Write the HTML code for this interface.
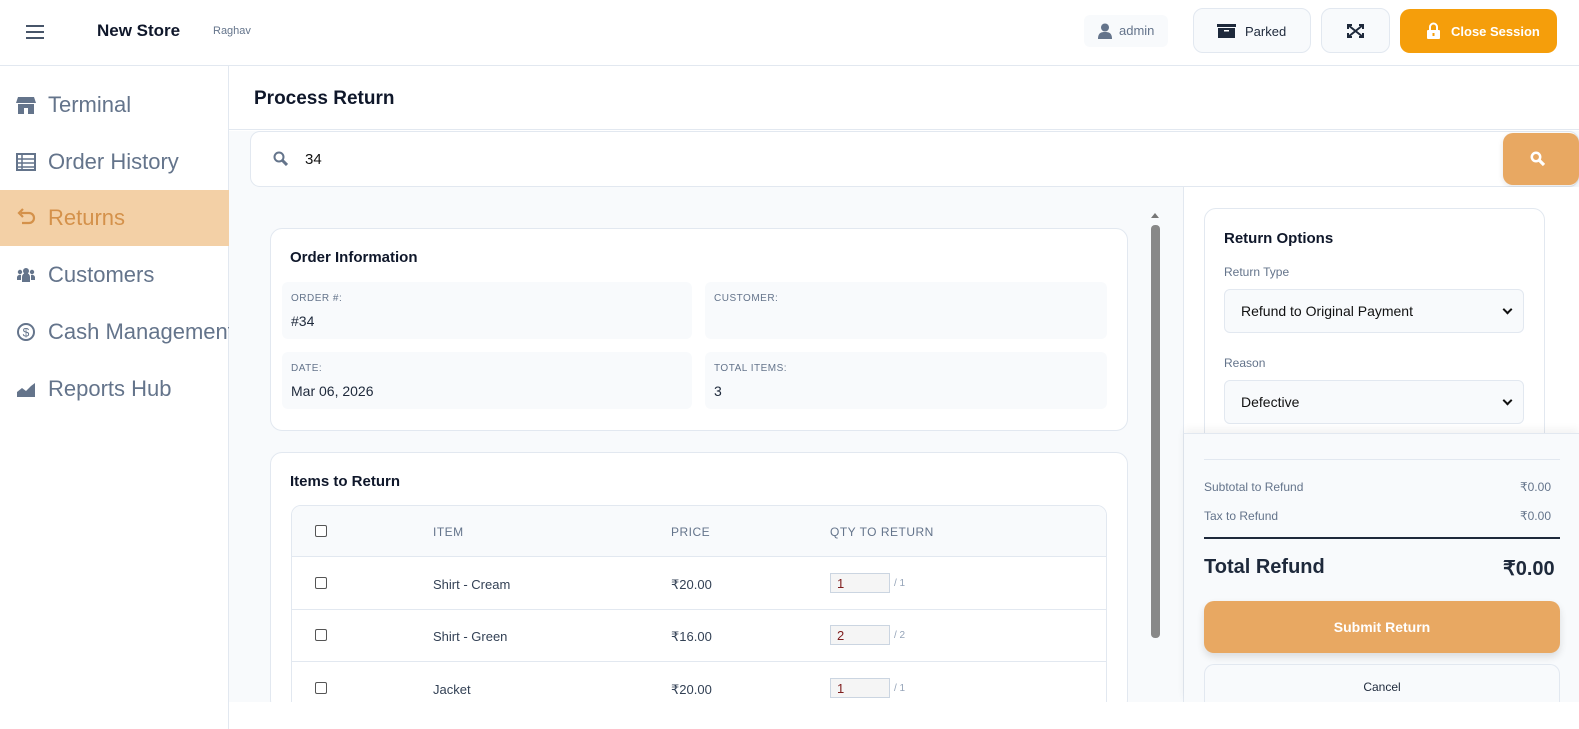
<!DOCTYPE html>
<html><head><meta charset="utf-8"><style>
*{box-sizing:border-box;margin:0;padding:0}
body{width:1579px;height:729px;overflow:hidden;background:#fff;font-family:"Liberation Sans",sans-serif;position:relative;color:#1e293b}
.a{position:absolute;white-space:nowrap}
.nav{position:absolute;left:0;width:229px;height:56px;display:flex;align-items:center;font-size:22px;color:#64748b;padding-left:16px;white-space:nowrap;overflow:hidden}
.nav svg{width:20px;height:20px;margin-right:12px;flex:none}
.lbl{font-size:10px;color:#64748b;letter-spacing:.5px}
.fld{position:absolute;background:#f8fafc;border-radius:6px;padding:11px 9px}
.fld .v{font-size:14px;color:#1e293b;margin-top:9px}
.cb{position:absolute;width:12px;height:12px;border:1px solid #555;border-radius:2px;background:#fff}
.td{position:absolute;font-size:13px;color:#334155}
.qty{position:absolute;width:60px;height:20px;border:1px solid #cbd5e1;background:#f5f5f5;font-size:13px;padding:2px 6px;color:#7f1d1d}
.sel{position:absolute;left:1224px;width:300px;height:44px;border:1px solid #e2e8f0;border-radius:6px;background:#f8fafc;font-size:14px;padding:13px 16px;color:#111}
.sel:after{content:"";position:absolute;right:12px;top:16px;width:5px;height:5px;border-right:2px solid #111;border-bottom:2px solid #111;transform:rotate(45deg)}
</style></head><body>
<div class="a" style="left:0;top:0;width:1579px;height:66px;border-bottom:1px solid #e2e8f0;background:#fff"></div>
<svg class="a" style="left:26px;top:25px" width="18" height="14"><path d="M0 1h18M0 7h18M0 13h18" stroke="#475569" stroke-width="2"/></svg>
<div class="a" style="left:97px;top:21px;font-size:17px;font-weight:bold;color:#0f172a">New Store</div>
<div class="a" style="left:213px;top:25px;font-size:11px;color:#64748b">Raghav</div>
<div class="a" style="left:1084px;top:15px;width:84px;height:32px;background:#f8fafc;border-radius:6px;font-size:13px;color:#64748b;padding:8px 0 0 35px">admin</div>
<svg class="a" style="left:1098px;top:23px" width="14" height="16"><circle cx="7" cy="4.5" r="4" fill="#64748b"/><path d="M0 16c0-6 3-7 7-7s7 1 7 7z" fill="#64748b"/></svg>
<div class="a" style="left:1193px;top:8px;width:118px;height:45px;border:1px solid #e2e8f0;border-radius:10px;background:#f8fafc;font-size:13px;color:#1e293b;padding:15px 0 0 51px">Parked</div>
<svg class="a" style="left:1217px;top:24px" width="19" height="14"><rect x="0" y="0" width="19" height="3" fill="#1e293b"/><rect x="1" y="4" width="17" height="10" fill="#1e293b"/><rect x="7" y="6" width="5" height="1.5" fill="#fff"/></svg>
<div class="a" style="left:1321px;top:8px;width:69px;height:45px;border:1px solid #e2e8f0;border-radius:10px;background:#f8fafc"></div>
<svg class="a" style="left:1347px;top:24px" width="17" height="14"><path d="M1 1l15 12M16 1L1 13" stroke="#1e293b" stroke-width="2"/><path d="M0 0h5v2H2v3H0zM17 0h-5v2h3v3h2zM0 14h5v-2H2V9H0zM17 14h-5v-2h3V9h2z" fill="#1e293b"/></svg>
<div class="a" style="left:1400px;top:9px;width:157px;height:44px;background:#f59e0b;border-radius:10px;color:#fff;font-weight:bold;font-size:13px;padding:15px 0 0 51px">Close Session</div>
<svg class="a" style="left:1427px;top:22px" width="13" height="17"><path d="M3 8V5a3.5 3.5 0 017 0v3" stroke="#fff" stroke-width="2" fill="none"/><rect x="0" y="8" width="13" height="9" rx="1" fill="#fff"/><rect x="5.5" y="11" width="2" height="3" fill="#f59e0b"/></svg>
<div class="a" style="left:228px;top:66px;width:1px;height:663px;background:#e2e8f0"></div>
<div class="nav" style="top:77px"><svg viewBox="0 0 20 20"><path d="M2 2h16l2 6H0z" fill="#64748b"/><path d="M2 9h16v10h-6v-6H8v6H2z" fill="#64748b"/></svg>Terminal</div>
<div class="nav" style="top:134px"><svg viewBox="0 0 20 20"><rect x="1" y="2" width="18" height="16" fill="none" stroke="#64748b" stroke-width="2"/><path d="M1 7h18M1 11h18M1 15h18M6 2v16" stroke="#64748b" stroke-width="1.5"/></svg>Order History</div>
<div class="a" style="left:0;top:190px;width:229px;height:56px;background:#f3d0a6"></div>
<div class="nav" style="top:190px;color:#d4914a"><svg viewBox="0 0 20 20"><path d="M5 5h8a5 5 0 010 10H6" stroke="#d4914a" stroke-width="2.2" fill="none"/><path d="M7 1L3 5l4 4" stroke="#d4914a" stroke-width="2.2" fill="none"/></svg>Returns</div>
<div class="nav" style="top:247px"><svg viewBox="0 0 20 20"><circle cx="10" cy="6" r="3" fill="#64748b"/><circle cx="4" cy="7" r="2.2" fill="#64748b"/><circle cx="16" cy="7" r="2.2" fill="#64748b"/><path d="M6 17v-5a4 4 0 018 0v5zM1 15v-3a3 3 0 014-2v5zM19 15v-3a3 3 0 00-4-2v5z" fill="#64748b"/></svg>Customers</div>
<div class="nav" style="top:304px"><svg viewBox="0 0 20 20"><circle cx="10" cy="10" r="8" fill="none" stroke="#64748b" stroke-width="2"/><text x="10" y="14.5" font-size="12" text-anchor="middle" fill="#64748b" font-family="Liberation Sans">$</text></svg>Cash Management</div>
<div class="nav" style="top:361px"><svg viewBox="0 0 20 20"><path d="M1 18V13l5-4 4 3 5-5 4-3v14z" fill="#64748b"/></svg>Reports Hub</div>
<div class="a" style="left:229px;top:66px;width:1350px;height:64px;background:#fff;border-bottom:1px solid #e2e8f0"></div>
<div class="a" style="left:254px;top:88px;font-size:19px;font-weight:bold;color:#0f172a">Process Return</div>
<div class="a" style="left:229px;top:131px;width:1350px;height:571px;background:#f8fafc"></div>
<div class="a" style="left:250px;top:131px;width:1329px;height:56px;background:#fff;border:1px solid #e2e8f0;border-radius:10px"></div>
<svg class="a" style="left:273px;top:151px" width="15" height="15"><circle cx="6" cy="6" r="4.5" stroke="#64748b" stroke-width="2" fill="none"/><path d="M9 9l5 5" stroke="#64748b" stroke-width="3"/></svg>
<div class="a" style="left:305px;top:151px;font-size:15px;color:#111">34</div>
<div class="a" style="left:1503px;top:133px;width:76px;height:52px;background:#e8a862;border-radius:10px;box-shadow:0 2px 6px rgba(0,0,0,.1)"></div>
<svg class="a" style="left:1530px;top:151px" width="15" height="15"><circle cx="6" cy="6" r="4.2" stroke="#fff" stroke-width="2.5" fill="none"/><path d="M9 9l5 5" stroke="#fff" stroke-width="3.2"/></svg>
<div class="a" style="left:1183px;top:187px;width:1px;height:515px;background:#e2e8f0"></div>
<div class="a" style="left:1184px;top:187px;width:395px;height:246px;background:#fff"></div>
<div class="a" style="left:1204px;top:208px;width:341px;height:240px;border:1px solid #e2e8f0;border-radius:12px;background:#fff"></div>
<div class="a" style="left:1224px;top:230px;font-size:15px;font-weight:bold;color:#0f172a">Return Options</div>
<div class="a" style="left:1224px;top:265px;font-size:12px;color:#64748b">Return Type</div>
<div class="sel" style="top:289px">Refund to Original Payment</div>
<div class="a" style="left:1224px;top:356px;font-size:12px;color:#64748b">Reason</div>
<div class="sel" style="top:380px">Defective</div>
<div class="a" style="left:1184px;top:433px;width:395px;height:269px;background:#f8fafc;border-top:1px solid #e2e8f0;box-shadow:0 -4px 8px rgba(0,0,0,.05)"></div>
<div class="a" style="left:1204px;top:459px;width:356px;height:1px;background:#e2e8f0"></div>
<div class="a" style="left:1204px;top:480px;font-size:12px;color:#64748b">Subtotal to Refund</div>
<div class="a" style="left:1520px;top:480px;font-size:12px;color:#64748b">₹0.00</div>
<div class="a" style="left:1204px;top:509px;font-size:12px;color:#64748b">Tax to Refund</div>
<div class="a" style="left:1520px;top:509px;font-size:12px;color:#64748b">₹0.00</div>
<div class="a" style="left:1204px;top:537px;width:356px;height:2px;background:#1e293b"></div>
<div class="a" style="left:1204px;top:556px;font-size:20px;font-weight:bold;color:#1e293b">Total Refund</div>
<div class="a" style="left:1503px;top:556px;font-size:20px;font-weight:bold;color:#1e293b">₹0.00</div>
<div class="a" style="left:1204px;top:601px;width:356px;height:52px;background:#e8a862;border-radius:10px;box-shadow:0 4px 8px rgba(0,0,0,.12);color:#fff;font-weight:bold;font-size:14px;text-align:center;line-height:52px">Submit Return</div>
<div class="a" style="left:1204px;top:664px;width:356px;height:38px;border:1px solid #e2e8f0;border-bottom:none;border-radius:10px 10px 0 0;font-size:12px;color:#1e293b;text-align:center;padding-top:15px">Cancel</div>
<div class="a" style="left:1151px;top:213px;width:0;height:0;border-left:4px solid transparent;border-right:4px solid transparent;border-bottom:5px solid #777"></div>
<div class="a" style="left:1151px;top:225px;width:9px;height:413px;background:#888;border-radius:4px"></div>
<div class="a" style="left:270px;top:228px;width:858px;height:203px;background:#fff;border:1px solid #e2e8f0;border-radius:12px"></div>
<div class="a" style="left:290px;top:249px;font-size:15px;font-weight:bold;color:#0f172a">Order Information</div>
<div class="fld" style="left:282px;top:282px;width:410px;height:57px"><div class="lbl">ORDER #:</div><div class="v">#34</div></div>
<div class="fld" style="left:705px;top:282px;width:402px;height:57px"><div class="lbl">CUSTOMER:</div></div>
<div class="fld" style="left:282px;top:352px;width:410px;height:57px"><div class="lbl">DATE:</div><div class="v">Mar 06, 2026</div></div>
<div class="fld" style="left:705px;top:352px;width:402px;height:57px"><div class="lbl">TOTAL ITEMS:</div><div class="v">3</div></div>
<div class="a" style="left:270px;top:452px;width:858px;height:260px;background:#fff;border:1px solid #e2e8f0;border-radius:12px"></div>
<div class="a" style="left:290px;top:473px;font-size:15px;font-weight:bold;color:#0f172a">Items to Return</div>
<div class="a" style="left:291px;top:505px;width:816px;height:210px;border:1px solid #e2e8f0;border-radius:10px;background:#fff;overflow:hidden">
<div style="height:51px;background:#f8fafc;border-bottom:1px solid #e2e8f0"></div>
<div style="height:53px;border-bottom:1px solid #e2e8f0"></div>
<div style="height:52px;border-bottom:1px solid #e2e8f0"></div>
</div>
<div class="cb" style="left:315px;top:525px"></div>
<div class="td" style="left:433px;top:525px;font-size:12px;color:#64748b;letter-spacing:.5px">ITEM</div>
<div class="td" style="left:671px;top:525px;font-size:12px;color:#64748b;letter-spacing:.5px">PRICE</div>
<div class="td" style="left:830px;top:525px;font-size:12px;color:#64748b;letter-spacing:.5px">QTY TO RETURN</div>
<div class="cb" style="left:315px;top:577px"></div><div class="td" style="left:433px;top:577px">Shirt - Cream</div><div class="td" style="left:671px;top:577px">₹20.00</div><div class="qty" style="left:830px;top:573px">1</div><div class="td" style="left:894px;top:578px;font-size:10px;color:#94a3b8">/ 1</div>
<div class="cb" style="left:315px;top:629px"></div><div class="td" style="left:433px;top:629px">Shirt - Green</div><div class="td" style="left:671px;top:629px">₹16.00</div><div class="qty" style="left:830px;top:625px">2</div><div class="td" style="left:894px;top:630px;font-size:10px;color:#94a3b8">/ 2</div>
<div class="cb" style="left:315px;top:682px"></div><div class="td" style="left:433px;top:682px">Jacket</div><div class="td" style="left:671px;top:682px">₹20.00</div><div class="qty" style="left:830px;top:678px">1</div><div class="td" style="left:894px;top:683px;font-size:10px;color:#94a3b8">/ 1</div>
<div class="a" style="left:229px;top:702px;width:1350px;height:27px;background:#fff"></div>
</body></html>
